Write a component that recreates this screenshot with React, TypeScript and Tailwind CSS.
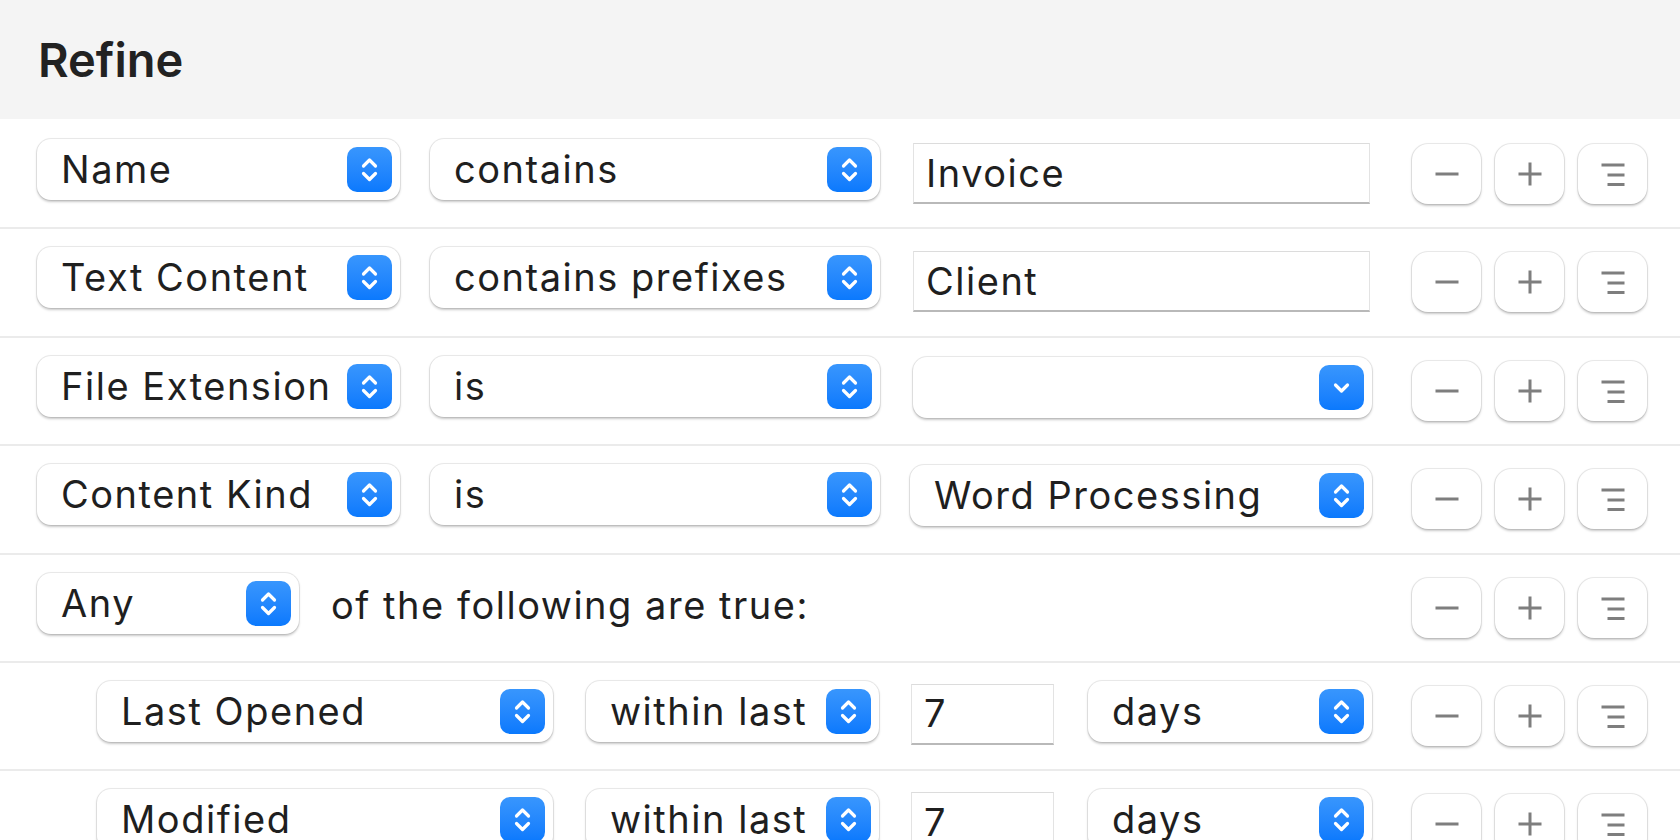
import React from "react";

const popupShadow =
  "shadow-[0_0_0_1px_rgba(0,0,0,0.07),0_1.5px_2.5px_rgba(0,0,0,0.22)]";

function Stepper() {
  return (
    <div className="flex h-[45px] w-[45px] shrink-0 items-center justify-center rounded-[10px] bg-gradient-to-b from-[#3896fd] to-[#0a79fd]">
      <svg width="45" height="45" viewBox="0 0 45 45" fill="none">
        <path
          d="M16.5 19 L22.5 13 L28.5 19"
          stroke="white"
          strokeWidth="3.2"
          strokeLinecap="round"
          strokeLinejoin="round"
        />
        <path
          d="M16.5 26.5 L22.5 32.5 L28.5 26.5"
          stroke="white"
          strokeWidth="3.2"
          strokeLinecap="round"
          strokeLinejoin="round"
        />
      </svg>
    </div>
  );
}

function DownBox() {
  return (
    <div className="flex h-[45px] w-[45px] shrink-0 items-center justify-center rounded-[10px] bg-gradient-to-b from-[#3896fd] to-[#0a79fd]">
      <svg width="45" height="45" viewBox="0 0 45 45" fill="none">
        <path
          d="M16.5 20 L22.5 26 L28.5 20"
          stroke="white"
          strokeWidth="3.2"
          strokeLinecap="round"
          strokeLinejoin="round"
        />
      </svg>
    </div>
  );
}

function Popup({
  label,
  className = "",
  down = false,
}: {
  label: string;
  className?: string;
  down?: boolean;
}) {
  return (
    <div
      className={`flex h-[61px] shrink-0 items-center rounded-[14px] bg-white pl-[24px] pr-[8px] ${popupShadow} ${className}`}
    >
      <span className="flex-1 whitespace-nowrap">{label}</span>
      {down ? <DownBox /> : <Stepper />}
    </div>
  );
}

function Field({ value, className = "" }: { value: string; className?: string }) {
  return (
    <div
      className={`flex h-[61px] shrink-0 items-center border-x border-t border-x-[#e3e3e3] border-t-[#dcdcdc] border-b-2 border-b-[#b9b9b9] bg-white pl-[12px] ${className}`}
    >
      <span>{value}</span>
    </div>
  );
}

function RowButtons() {
  const btn = `flex h-[60px] w-[69px] items-center justify-center rounded-[16px] bg-white ${popupShadow}`;
  return (
    <div className="ml-auto mt-[5px] flex gap-[14px] pr-[33px]">
      <div className={btn}>
        <svg width="24" height="24" viewBox="0 0 24 24">
          <rect x="0.5" y="10.5" width="23" height="3" fill="#7e7e7e" />
        </svg>
      </div>
      <div className={btn}>
        <svg width="24" height="24" viewBox="0 0 24 24">
          <rect x="0.5" y="10.5" width="23" height="3" fill="#7e7e7e" />
          <rect x="10.5" y="0.5" width="3" height="23" fill="#7e7e7e" />
        </svg>
      </div>
      <div className={btn}>
        <svg width="24" height="24" viewBox="0 0 24 24">
          <rect x="0.5" y="1.5" width="23" height="3" fill="#7e7e7e" />
          <rect x="6.5" y="11.5" width="17" height="3" fill="#7e7e7e" />
          <rect x="6.5" y="21" width="17" height="3" fill="#7e7e7e" />
        </svg>
      </div>
    </div>
  );
}

function Row({
  children,
  first = false,
  className = "",
}: {
  children: React.ReactNode;
  first?: boolean;
  className?: string;
}) {
  return (
    <div
      className={`flex h-[108.4px] shrink-0 items-start border-t-2 pt-[18px] ${
        first ? "border-t-white" : "border-t-[#ebebeb]"
      } ${className}`}
    >
      {children}
    </div>
  );
}

export default function App() {
  return (
    <div className="flex h-[840px] w-[1680px] flex-col overflow-hidden bg-white font-[family-name:Inter,sans-serif] text-[38px] tracking-[0.04em] text-[#1f1f1f]">
      <div className="flex h-[119px] shrink-0 items-center bg-[#f4f4f4] pl-[38px] pt-[2px]">
        <span className="text-[47px] font-semibold tracking-[0em] text-[#222]">Refine</span>
      </div>

      <Row first className="pl-[37px]">
        <Popup label="Name" className="w-[363px]" />
        <Popup label="contains" className="ml-[30px] w-[450px]" />
        <Field value="Invoice" className="ml-[33px] mt-[4px] w-[457px]" />
        <RowButtons />
      </Row>

      <Row className="pl-[37px]">
        <Popup label="Text Content" className="w-[363px]" />
        <Popup label="contains prefixes" className="ml-[30px] w-[450px]" />
        <Field value="Client" className="ml-[33px] mt-[4px] w-[457px]" />
        <RowButtons />
      </Row>

      <Row className="pl-[37px]">
        <Popup label="File Extension" className="w-[363px]" />
        <Popup label="is" className="ml-[30px] w-[450px]" />
        <Popup label="" down className="ml-[33px] mt-[1px] w-[459px]" />
        <RowButtons />
      </Row>

      <Row className="pl-[37px]">
        <Popup label="Content Kind" className="w-[363px]" />
        <Popup label="is" className="ml-[30px] w-[450px]" />
        <Popup label="Word Processing" className="ml-[30px] mt-[1px] w-[462px]" />
        <RowButtons />
      </Row>

      <Row className="pl-[37px]">
        <Popup label="Any" className="w-[262px]" />
        <div className="ml-[32px] flex h-[61px] items-center pt-[4px] whitespace-nowrap">
          of the following are true:
        </div>
        <RowButtons />
      </Row>

      <Row className="pl-[97px]">
        <Popup label="Last Opened" className="w-[456px]" />
        <Popup label="within last" className="ml-[33px] w-[293px]" />
        <Field value="7" className="ml-[32px] mt-[3px] w-[143px]" />
        <Popup label="days" className="ml-[34px] w-[284px]" />
        <RowButtons />
      </Row>

      <Row className="pl-[97px]">
        <Popup label="Modified" className="w-[456px]" />
        <Popup label="within last" className="ml-[33px] w-[293px]" />
        <Field value="7" className="ml-[32px] mt-[3px] w-[143px]" />
        <Popup label="days" className="ml-[34px] w-[284px]" />
        <RowButtons />
      </Row>
    </div>
  );
}
